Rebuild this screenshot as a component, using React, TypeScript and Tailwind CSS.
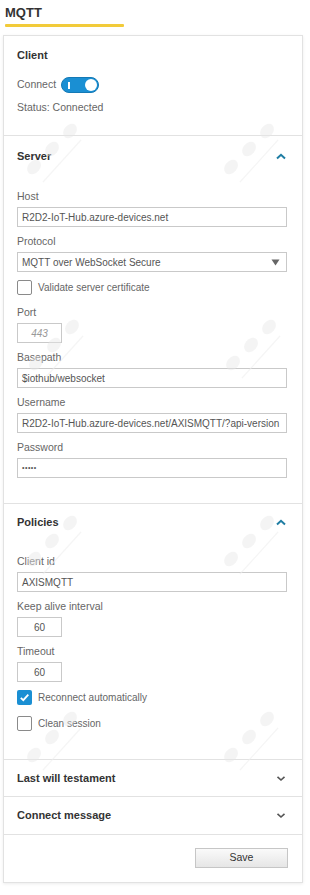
import React from "react";

const font = { fontFamily: '"Liberation Sans", Arial, sans-serif' };

function Watermark() {
  return (
    <svg width="60" height="70" viewBox="0 0 60 70" fill="none">
      <g fill="#e6e6e6" fillOpacity="0.45">
        <ellipse cx="45" cy="13" rx="8" ry="6" transform="rotate(-50 45 13)" />
        <ellipse cx="27" cy="31" rx="8" ry="6" transform="rotate(-50 27 31)" />
        <ellipse cx="9" cy="49" rx="8" ry="6" transform="rotate(-50 9 49)" />
      </g>
      <line x1="18" y1="64" x2="56" y2="22" stroke="#eeeeee" strokeOpacity="0.6" strokeWidth="1.2" />
    </svg>
  );
}

function ChevronUp() {
  return (
    <svg width="10" height="7" viewBox="0 0 10 7" className="mr-[2px]">
      <path d="M1 5.5 L5 1.8 L9 5.5" stroke="#1f7da3" strokeWidth="2" fill="none" />
    </svg>
  );
}

function ChevronDown() {
  return (
    <svg width="10" height="7" viewBox="0 0 10 7" className="mr-[2px]">
      <path d="M1.5 1.8 L5 5 L8.5 1.8" stroke="#555" strokeWidth="1.6" fill="none" />
    </svg>
  );
}

function Label({ children }: { children: React.ReactNode }) {
  return <div className="text-[10.5px] leading-[14px] text-[#666] mb-[4px]">{children}</div>;
}

function TextInput({ value, small }: { value: string; small?: boolean }) {
  return (
    <div
      className={`h-[20px] border border-[#c9c9c9] bg-white flex items-center overflow-hidden whitespace-nowrap text-[10px] text-[#555] mb-[7px] ${
        small ? "w-[45px] justify-center" : "w-[270px] px-[4px]"
      }`}
    >
      {value}
    </div>
  );
}

function Checkbox({ checked, label }: { checked?: boolean; label: string }) {
  return (
    <div className="flex items-center h-[15px]">
      {checked ? (
        <div className="w-[15px] h-[15px] rounded-[2px] bg-[#1a8fd3] flex items-center justify-center">
          <svg width="11" height="11" viewBox="0 0 11 11">
            <path d="M1.8 5.8 L4.3 8.2 L9.3 2.6" stroke="white" strokeWidth="1.8" fill="none" />
          </svg>
        </div>
      ) : (
        <div className="w-[15px] h-[15px] rounded-[2px] border border-[#8a8a8a] bg-white" />
      )}
      <span className="ml-[6px] text-[10px] text-[#666]">{label}</span>
    </div>
  );
}

export default function App() {
  return (
    <div className="w-[310px] h-[895px] bg-white px-[3px] relative" style={font}>
      <div className="pt-[5px] pl-[2px]">
        <div className="text-[13px] leading-[16px] font-bold text-[#333]">MQTT</div>
        <div className="mt-[3px] h-[3px] w-[119px] bg-[#f2cb3a] rounded-[1px]" />
      </div>

      <div className="mt-[8px] w-[300px] border border-[#e2e2e2] shadow-[0_1px_3px_rgba(0,0,0,0.08)] bg-white">
        {/* Client */}
        <div className="pl-[13px] pr-[14px] pt-[12px] pb-[21px]">
          <div className="text-[11px] leading-[14px] font-bold text-[#333]">Client</div>
          <div className="mt-[15px] h-[16px] flex items-center">
            <span className="text-[10.5px] text-[#666]">Connect</span>
            <div className="ml-[5px] w-[38px] h-[16px] rounded-full bg-[#1a8fd3] border border-[#1479b5] relative flex items-center">
              <div className="ml-[6px] w-[1.5px] h-[7px] bg-white" />
              <div className="absolute right-[1px] top-[1px] w-[12px] h-[12px] rounded-full bg-white" />
            </div>
          </div>
          <div className="mt-[7px] text-[10.5px] leading-[14px] text-[#666]">Status: Connected</div>
        </div>

        {/* Server */}
        <div className="border-t border-[#e2e2e2] pl-[13px] pr-[14px] pt-[13px] pb-[18px]">
          <div className="flex items-center justify-between h-[14px]">
            <span className="text-[11px] leading-[14px] font-bold text-[#333]">Server</span>
            <ChevronUp />
          </div>
          <div className="mt-[26px]">
            <Label>Host</Label>
            <TextInput value="R2D2-IoT-Hub.azure-devices.net" />
            <Label>Protocol</Label>
            <div className="w-[270px] h-[20px] border border-[#c9c9c9] bg-white flex items-center justify-between px-[4px] text-[10px] text-[#555]">
              <span>MQTT over WebSocket Secure</span>
              <svg width="9" height="7" viewBox="0 0 9 7" className="mr-[2px]">
                <path d="M0.5 0.5 L8.5 0.5 L4.5 6.5 Z" fill="#666" />
              </svg>
            </div>
            <div className="mt-[8px]">
              <Checkbox label="Validate server certificate" />
            </div>
            <div className="mt-[10px]">
              <Label>Port</Label>
              <div className="w-[45px] h-[20px] border border-[#c9c9c9] bg-white flex items-center justify-center text-[10px] italic text-[#999] mb-[7px]">
                443
              </div>
              <Label>Basepath</Label>
              <TextInput value="$iothub/websocket" />
              <Label>Username</Label>
              <TextInput value="R2D2-IoT-Hub.azure-devices.net/AXISMQTT/?api-version" />
              <Label>Password</Label>
              <div className="w-[270px] h-[20px] border border-[#c9c9c9] bg-white flex items-center px-[4px] text-[7px] tracking-[0.5px] text-[#555] mb-[7px]">
                •••••
              </div>
            </div>
          </div>
        </div>

        {/* Policies */}
        <div className="border-t border-[#e2e2e2] pl-[13px] pr-[14px] pt-[11px] pb-[28px]">
          <div className="flex items-center justify-between h-[14px]">
            <span className="text-[11px] leading-[14px] font-bold text-[#333]">Policies</span>
            <ChevronUp />
          </div>
          <div className="mt-[25px]">
            <Label>Client id</Label>
            <TextInput value="AXISMQTT" />
            <Label>Keep alive interval</Label>
            <TextInput value="60" small />
            <Label>Timeout</Label>
            <div className="w-[45px] h-[20px] border border-[#c9c9c9] bg-white flex items-center justify-center text-[10px] text-[#555]">
              60
            </div>
            <div className="mt-[8px]">
              <Checkbox checked label="Reconnect automatically" />
            </div>
            <div className="mt-[11px]">
              <Checkbox label="Clean session" />
            </div>
          </div>
        </div>

        {/* Last will testament */}
        <div className="border-t border-[#e2e2e2] pl-[13px] pr-[14px] h-[37px] flex items-center justify-between">
          <span className="text-[11px] font-bold text-[#333]">Last will testament</span>
          <ChevronDown />
        </div>

        {/* Connect message */}
        <div className="border-t border-[#e2e2e2] pl-[13px] pr-[14px] h-[38px] flex items-center justify-between">
          <span className="text-[11px] font-bold text-[#333]">Connect message</span>
          <ChevronDown />
        </div>

        {/* Footer */}
        <div className="border-t border-[#e2e2e2] pr-[14px] pt-[13px] pb-[14px] flex justify-end">
          <button className="w-[93px] h-[20px] border border-[#c6c6c6] bg-gradient-to-b from-[#fafafa] to-[#e6e6e6] text-[10.5px] text-[#333] flex items-center justify-center">
            Save
          </button>
        </div>
      </div>

      {/* watermarks overlay */}
      <div className="pointer-events-none absolute left-[25px] top-[118px]"><Watermark /></div>
      <div className="pointer-events-none absolute left-[222px] top-[118px]"><Watermark /></div>
      <div className="pointer-events-none absolute left-[27px] top-[314px]"><Watermark /></div>
      <div className="pointer-events-none absolute left-[224px] top-[314px]"><Watermark /></div>
      <div className="pointer-events-none absolute left-[25px] top-[510px]"><Watermark /></div>
      <div className="pointer-events-none absolute left-[222px] top-[510px]"><Watermark /></div>
      <div className="pointer-events-none absolute left-[25px] top-[706px]"><Watermark /></div>
      <div className="pointer-events-none absolute left-[222px] top-[706px]"><Watermark /></div>
    </div>
  );
}
